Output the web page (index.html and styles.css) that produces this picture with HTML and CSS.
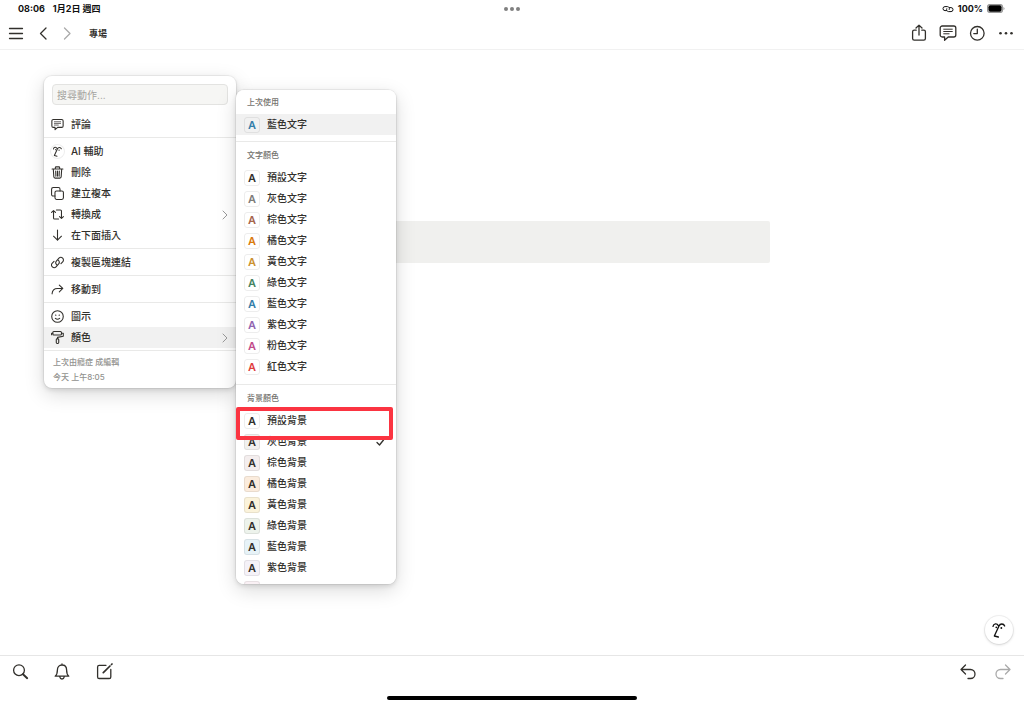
FILE: index.html
```html
<!DOCTYPE html>
<html lang="zh-Hant">
<head>
<meta charset="utf-8">
<meta name="viewport" content="width=device-width, initial-scale=1">
<title>專場</title>
<link rel="stylesheet" href="styles.css">
</head>
<body class="app">
<svg class="defs" aria-hidden="true">
  <symbol id="face" viewBox="0 0 40 48">
    <path d="M2 13C4 4 14 3 18 11M20 12C23 4 34 4 37 12M20 12L6 42L18 45"/>
    <circle cx="12" cy="16" r="2.8" fill="currentColor" stroke="none"/>
    <circle cx="27" cy="18" r="2.8" fill="currentColor" stroke="none"/>
  </symbol>
  <symbol id="comment" viewBox="0 0 18 18">
    <path d="M3.2 2h11.6a2 2 0 0 1 2 2v7a2 2 0 0 1-2 2H9.2L5.6 16.2V13H3.2a2 2 0 0 1-2-2V4a2 2 0 0 1 2-2z"/>
    <path d="M4.700 5.200h8.600M4.700 7.500h8.600M4.700 9.800h5.400" stroke-width="1"/>
  </symbol>
  <symbol id="right" viewBox="0 0 8 12"><path d="M2 2l4 4-4 4"/></symbol>
</svg>

<div class="status">
  <div class="status-left"><span>08:06</span><span>1月2日 週四</span></div>
  <svg class="multitask" viewBox="0 0 16 6" aria-hidden="true"><circle cx="2" cy="3" r="2"/><circle cx="8" cy="3" r="2"/><circle cx="14" cy="3" r="2"/></svg>
  <div class="status-right">
    <svg class="hotspot" viewBox="0 0 12 10" aria-hidden="true"><path d="M4.500 6.600H3a2 2 0 0 1 0-4h2.500a2 2 0 0 1 1.800 2.900M7.500 3.600H9a2 2 0 0 1 0 4H6.500a2 2 0 0 1-1.800-2.900"/></svg>
    <span>100%</span>
    <svg class="battery" viewBox="0 0 18 9" aria-hidden="true"><rect x=".5" y=".5" width="15" height="8" rx="2.6" fill="none" stroke="#999"/><rect x="1.4" y="1.3" width="13.2" height="6.4" rx="1.9"/><path d="M16.500 3v3q1-.5 1-1.500T16.500 3z" fill="#999"/></svg>
  </div>
</div>

<header class="topbar">
  <nav class="nav">
    <button class="icon-btn" aria-label="選單"><svg viewBox="0 0 18 18"><path d="M2.500 4.500h13M2.500 9.500h13M2.500 14.500h13"/></svg></button>
    <div class="history">
      <button class="icon-btn" aria-label="返回"><svg viewBox="0 0 18 18"><path d="M12 4L6.500 9.500 12 15"/></svg></button>
      <button class="icon-btn faded" aria-label="前進"><svg viewBox="0 0 18 18"><path d="M6.500 4L12 9.500 6.500 15"/></svg></button>
    </div>
    <h1 class="title">專場</h1>
  </nav>
  <div class="tools">
    <button class="icon-btn" aria-label="分享"><svg viewBox="0 0 18 18"><path d="M6.200 6.200H4.200a1.600 1.600 0 0 0-1.600 1.600v6.800a1.600 1.600 0 0 0 1.600 1.600h9.600a1.600 1.600 0 0 0 1.600-1.600V7.800a1.600 1.600 0 0 0-1.600-1.600H11.800M9 11V1.200M6 4l3-2.900L12 4"/></svg></button>
    <button class="icon-btn" aria-label="評論"><svg><use href="#comment"/></svg></button>
    <button class="icon-btn" aria-label="更新紀錄"><svg viewBox="0 0 18 18"><circle cx="9.300" cy="9.300" r="6.800"/><path d="M9.300 5.200V9.600H5.800"/></svg></button>
    <button class="icon-btn" aria-label="更多"><svg class="solid" viewBox="0 0 18 18"><circle cx="3.500" cy="9.300" r="1.300"/><circle cx="9" cy="9.300" r="1.300"/><circle cx="14.500" cy="9.300" r="1.300"/></svg></button>
  </div>
</header>

<main class="page">
  <div class="block"></div>

  <div class="popover">
    <div class="menu" role="menu">
      <section class="group first">
        <input class="search" type="text" placeholder="搜尋動作..." aria-label="搜尋動作">
        <button class="item" role="menuitem"><svg class="ico"><use href="#comment"/></svg>評論</button>
      </section>
      <section class="group">
        <button class="item" role="menuitem"><span class="ico ai"><svg><use href="#face"/></svg></span>AI 輔助</button>
        <button class="item" role="menuitem"><svg class="ico" viewBox="0 0 18 18"><path d="M1.500 4.200h15M6 4V2.500Q6 1.200 7.200 1.200h3.600Q12 1.200 12 2.500V4M3.200 4.500l.7 10.500q.1 1.800 1.800 1.800h6.600q1.700 0 1.800-1.800l.7-10.500M6.500 7l.3 7M9 7v7M11.500 7l-.3 7"/></svg>刪除</button>
        <button class="item" role="menuitem"><svg class="ico" viewBox="0 0 18 18"><rect x="5.500" y="5.500" width="11.700" height="11.700" rx="2.200"/><path d="M5.500 12.500H3a2.200 2.200 0 0 1-2.200-2.200V3A2.200 2.200 0 0 1 3 .8h7.300A2.200 2.200 0 0 1 12.500 3v2.500"/></svg>建立複本</button>
        <button class="item" role="menuitem"><svg class="ico" viewBox="0 0 18 18"><path d="M7.500 2.800h5.500q1.500 0 1.500 1.500V14M11.800 11.800l2.700 2.700 2.700-2.700M10.500 15.200H5q-1.500 0-1.500-1.500V4M.8 6.200l2.700-2.700 2.700 2.700"/></svg>轉換成<svg class="chevron"><use href="#right"/></svg></button>
        <button class="item" role="menuitem"><svg class="ico" viewBox="0 0 18 18"><path d="M9 1.500v14M3.500 10L9 15.500l5.500-5.500"/></svg>在下面插入</button>
      </section>
      <section class="group">
        <button class="item" role="menuitem"><svg class="ico" viewBox="0 0 18 18"><path d="M8 12.200A4 4 0 0 1 7.700 6.600L11 3.100a3.600 3.600 0 0 1 5.200 5.100L13.800 10.700M10 5.800A4 4 0 0 1 10.300 11.400L7 14.900a3.600 3.600 0 0 1-5.200-5.100L4.200 7.300"/></svg>複製區塊連結</button>
      </section>
      <section class="group">
        <button class="item" role="menuitem"><svg class="ico" viewBox="0 0 18 18"><path d="M1.500 15Q2 7.500 9 7.500h7.200M11.500 2.800l4.800 4.700-4.800 4.700"/></svg>移動到</button>
      </section>
      <section class="group">
        <button class="item" role="menuitem"><svg class="ico" viewBox="0 0 18 18"><circle cx="9" cy="9" r="8"/><path d="M6 11.500Q9 14 12 11.500"/><circle cx="6.500" cy="7.200" r=".3"/><circle cx="11.500" cy="7.200" r=".3"/></svg>圖示</button>
        <button class="item active" role="menuitem" aria-expanded="true"><svg class="ico" viewBox="0 0 18 18"><rect x="2.500" y=".8" width="12" height="4.800" rx="1.400"/><path d="M2.500 3.200H.8v2M14.500 3.200h2.500v4L9 8.800v2"/><rect x="7.300" y="10.800" width="3.400" height="6.400" rx="1.200"/></svg>顏色<svg class="chevron"><use href="#right"/></svg></button>
      </section>
      <p class="edited">上次由癮症 成編輯<br>今天 上午8:05</p>
    </div>

    <div class="submenu" role="menu" aria-label="顏色">
      <section class="colors">
        <h2 class="label">上次使用</h2>
        <button class="color active" role="menuitem"><span class="swatch t-blue">A</span>藍色文字</button>
      </section>
      <section class="colors">
        <h2 class="label">文字顏色</h2>
        <button class="color" role="menuitem"><span class="swatch">A</span>預設文字</button>
        <button class="color" role="menuitem"><span class="swatch t-gray">A</span>灰色文字</button>
        <button class="color" role="menuitem"><span class="swatch t-brown">A</span>棕色文字</button>
        <button class="color" role="menuitem"><span class="swatch t-orange">A</span>橘色文字</button>
        <button class="color" role="menuitem"><span class="swatch t-yellow">A</span>黃色文字</button>
        <button class="color" role="menuitem"><span class="swatch t-green">A</span>綠色文字</button>
        <button class="color" role="menuitem"><span class="swatch t-blue">A</span>藍色文字</button>
        <button class="color" role="menuitem"><span class="swatch t-purple">A</span>紫色文字</button>
        <button class="color" role="menuitem"><span class="swatch t-pink">A</span>粉色文字</button>
        <button class="color" role="menuitem"><span class="swatch t-red">A</span>紅色文字</button>
      </section>
      <section class="colors">
        <h2 class="label">背景顏色</h2>
        <button class="color marked" role="menuitem"><span class="swatch">A</span>預設背景</button>
        <button class="color" role="menuitem"><span class="swatch b-gray">A</span>灰色背景<svg class="check" viewBox="0 0 10 10"><path d="M2 5.500L4.500 8l4-5"/></svg></button>
        <button class="color" role="menuitem"><span class="swatch b-brown">A</span>棕色背景</button>
        <button class="color" role="menuitem"><span class="swatch b-orange">A</span>橘色背景</button>
        <button class="color" role="menuitem"><span class="swatch b-yellow">A</span>黃色背景</button>
        <button class="color" role="menuitem"><span class="swatch b-green">A</span>綠色背景</button>
        <button class="color" role="menuitem"><span class="swatch b-blue">A</span>藍色背景</button>
        <button class="color" role="menuitem"><span class="swatch b-purple">A</span>紫色背景</button>
        <button class="color" role="menuitem" aria-label="粉色背景"><span class="swatch b-pink"></span></button>
      </section>
    </div>
  </div>

  <button class="assistant" aria-label="AI 輔助"><svg><use href="#face"/></svg></button>
</main>

<footer class="bottom">
  <div class="actions">
    <div class="actions-left">
      <button class="icon-btn" aria-label="搜尋"><svg viewBox="0 0 18 18"><circle cx="8" cy="7.200" r="5.400"/><path d="M12 11.200L16.200 15.200" stroke-width="1.900"/></svg></button>
      <button class="icon-btn" aria-label="通知"><svg viewBox="0 0 18 18"><path d="M9 1V2M2.200 13.200Q4.400 11.500 4.400 7C4.400 4 6.200 2 9 2S13.600 4 13.600 7Q13.600 11.500 15.800 13.200zM6.800 13.800Q7.200 16 9 16T11.200 13.800"/></svg></button>
      <button class="icon-btn" aria-label="新增頁面"><svg viewBox="0 0 18 18"><path d="M11 2.300H4.200a1.600 1.600 0 0 0-1.600 1.600v10a1.600 1.600 0 0 0 1.600 1.600h10a1.600 1.600 0 0 0 1.600-1.600V6.500"/><path d="M8.300 9.700L15 3M16.500 1.500l.5-.5" stroke-width="1.700"/></svg></button>
    </div>
    <div class="actions-right">
      <button class="icon-btn" aria-label="復原"><svg viewBox="0 0 18 18"><path d="M6.500 2L2 6.500 6.500 11M2 6.500h9.500a4.500 4.500 0 0 1 0 9H9"/></svg></button>
      <button class="icon-btn faded" aria-label="重做"><svg viewBox="0 0 18 18"><path d="M11.500 2L16 6.500 11.500 11M16 6.500H6.500a4.500 4.500 0 0 0 0 9H9"/></svg></button>
    </div>
  </div>
  <div class="home"></div>
</footer>
</body>
</html>
```
FILE: styles.css
```css
* { box-sizing: border-box; margin: 0; }

.app {
  display: flex;
  flex-direction: column;
  height: 100vh;
  overflow: hidden;
  background: #fff;
  color: #32302c;
  font: 500 10px/15px Inter, "Noto Sans CJK TC", sans-serif;
}

button, input { font: inherit; color: inherit; }
button { border: 0; padding: 0; background: none; cursor: pointer; }

svg {
  display: block;
  fill: none;
  stroke: currentColor;
  stroke-width: 1.3;
  stroke-linecap: round;
  stroke-linejoin: round;
}

.defs { position: absolute; width: 0; height: 0; }

/* Device status */
.status {
  display: grid;
  grid-template-columns: 1fr auto 1fr;
  align-items: center;
  height: 17px;
  padding: 0 19px 0 18px;
  color: #111;
  font-size: 9px;
  font-weight: 700;
}
.status-left { display: flex; gap: 8px; }
.status-right { display: flex; align-items: center; justify-content: flex-end; gap: 4px; }
.multitask { width: 16px; height: 6px; fill: #808080; stroke: none; }
.hotspot { width: 12px; height: 10px; stroke-width: 1; }
.battery { width: 18px; height: 9px; fill: #000; stroke: none; }

/* Top bar */
.topbar {
  display: flex;
  align-items: center;
  justify-content: space-between;
  height: 33px;
  padding: 0 9px 0 7px;
  border-bottom: 1px solid #f1f1f1;
}
.nav { display: flex; align-items: center; gap: 9px; }
.history { display: flex; gap: 6px; }
.title { padding-left: 4px; font-size: 9px; font-weight: 600; }
.tools { display: flex; gap: 11px; }
.icon-btn { width: 18px; height: 18px; }
.icon-btn svg { width: 18px; height: 18px; }
.icon-btn .solid { fill: currentColor; stroke: none; }
.faded { color: #aaa; }

/* Page */
.page { position: relative; flex: 1; min-height: 0; padding-top: 171px; }
.block {
  width: 50.3%;
  height: 42px;
  margin: 0 auto;
  border-radius: 2px;
  background: #f0f0ee;
}

.popover {
  position: absolute;
  top: 26px;
  left: 44px;
  display: flex;
  align-items: flex-start;
}
.menu, .submenu {
  border-radius: 8px;
  background: #fff;
  box-shadow: 0 0 0 1px rgba(0, 0, 0, .05), 0 2px 5px rgba(0, 0, 0, .12), 0 6px 20px rgba(0, 0, 0, .15);
}
.menu { width: 192px; }

.group { padding: 3px 0 2px; border-bottom: 1px solid #e9e9e8; }
.group.first { padding-top: 8px; }
.search {
  display: block;
  width: calc(100% - 16px);
  height: 21px;
  margin: 0 8px 9px;
  padding: 0 4px;
  border: 1px solid #e3e3e1;
  border-radius: 4px;
  background: #f6f6f4;
  font-weight: 400;
}
.search::placeholder { color: #a5a4a0; }

.item, .color {
  display: flex;
  align-items: center;
  gap: 7px;
  width: 100%;
  height: 21px;
  text-align: left;
}
.item { padding: 0 7px; }
.item.active, .color.active { background: #f1f1f1; }
.ico { width: 13px; height: 13px; stroke-width: 1.5; }
.ai {
  display: grid;
  place-items: center;
  border-radius: 50%;
  box-shadow: 0 0 0 1px #eee;
}
.ai svg { width: 9px; height: 11px; stroke-width: 4.5; }
.chevron { width: 8px; height: 12px; margin-left: auto; color: #999; stroke-width: 1; }
.edited { padding: 4px 9px 3px; color: #91918e; font-size: 8px; }

/* Color list */
.submenu {
  width: 160px;
  max-height: 70vh;
  margin-top: 14px;
  overflow-y: auto;
  scrollbar-width: none;
}
.colors { padding-bottom: 6px; }
.colors + .colors { padding: 1px 0 7px; border-top: 1px solid #e9e9e8; }
.label {
  padding: 0 11px;
  color: #73726e;
  font-size: 8px;
  font-weight: 500;
  line-height: 24px;
}
.color { position: relative; padding: 0 11px 0 8px; }
.swatch {
  display: grid;
  place-items: center;
  width: 16px;
  height: 16px;
  border: 1px solid rgba(0, 0, 0, .07);
  border-radius: 3px;
  font-size: 11px;
  font-weight: 600;
  line-height: 14px;
}
.check { width: 10px; height: 10px; margin-left: auto; }

.marked::after {
  content: "";
  position: absolute;
  z-index: 1;
  inset: -3px 3px -9px 0;
  border: 4px solid #fb3441;
  border-radius: 2px;
}

.t-gray { color: #7d7c78; }
.t-brown { color: #a5654b; }
.t-orange { color: #d97a0b; }
.t-yellow { color: #cb912f; }
.t-green { color: #448361; }
.t-blue { color: #337ea9; }
.t-purple { color: #9065b0; }
.t-pink { color: #c14c8a; }
.t-red { color: #e03e3e; }

.b-gray { background: #f1f1ef; }
.b-brown { background: #f4eeee; }
.b-orange { background: #fbecdd; }
.b-yellow { background: #fbf3db; }
.b-green { background: #edf3ec; }
.b-blue { background: #e7f3f8; }
.b-purple { background: #f5f2f8; }
.b-pink { background: #faf1f5; }

.assistant {
  position: absolute;
  right: 11px;
  bottom: 11px;
  display: grid;
  place-items: center;
  width: 28px;
  height: 28px;
  border-radius: 50%;
  background: #fff;
  box-shadow: 0 0 0 1px rgba(0, 0, 0, .05), 0 1px 3px rgba(0, 0, 0, .15);
  color: #111;
}
.assistant svg { width: 14px; height: 16px; stroke-width: 4; }

/* Bottom bar */
.bottom { border-top: 1px solid #e6e6e6; padding-bottom: 5px; }
.actions {
  display: flex;
  align-items: center;
  justify-content: space-between;
  height: 31px;
  padding: 0 12px 0 11px;
}
.actions-left { display: flex; gap: 24px; }
.actions-right { display: flex; gap: 17px; }
.home {
  width: 250px;
  height: 4px;
  margin: 9px auto 0;
  border-radius: 2px;
  background: #000;
}
```
